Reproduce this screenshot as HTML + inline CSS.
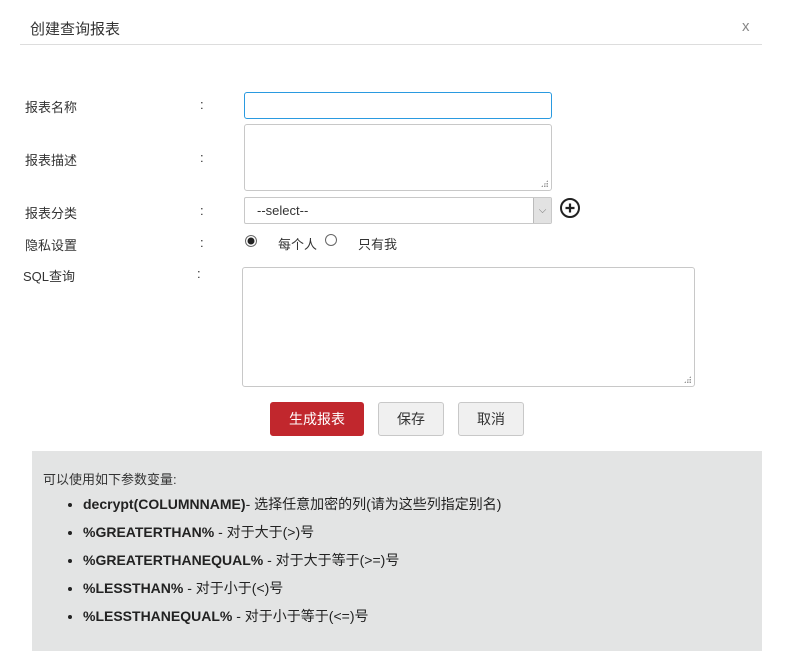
<!DOCTYPE html>
<html><head><meta charset="utf-8"><style>
body{margin:0;width:795px;height:671px;background:#fff;font-family:"Liberation Sans","Noto Sans CJK SC",sans-serif;color:#333;font-size:13px;position:relative;overflow:hidden}
.a{position:absolute}
.lbl{position:absolute;left:25px}
.col{position:absolute;left:200px}
.box{position:absolute;border:1px solid #c8c8c8;border-radius:3px;background:#fff;box-sizing:border-box}
.btn{position:absolute;top:402px;height:34px;border:1px solid #c8c8c8;border-radius:3px;background:#f0f0f0;box-sizing:border-box;text-align:center;line-height:32px;font-size:14px}
.grip{position:absolute;right:3px;bottom:3px;width:7px;height:7px;background:radial-gradient(circle,#999 0.8px,transparent 1px) 0 0/2.5px 2.5px;clip-path:polygon(100% 0,100% 100%,0 100%)}
li{margin:0 0 12px 0;line-height:16px;font-size:14px}
</style></head><body>
<div class="a" style="left:30px;top:18px;font-size:15px;color:#333">创建查询报表</div>
<div class="a" style="left:742px;top:18px;font-size:15px;color:#888">x</div>
<div class="a" style="left:20px;top:44px;width:742px;height:1px;background:#ddd"></div>

<div class="lbl" style="top:97px">报表名称</div><div class="col" style="top:97px">:</div>
<div class="box" style="left:244px;top:92px;width:308px;height:27px;border-color:#2a9ae0"></div>

<div class="lbl" style="top:150px">报表描述</div><div class="col" style="top:150px">:</div>
<div class="box" style="left:244px;top:124px;width:308px;height:67px"><div class="grip"></div></div>

<div class="lbl" style="top:203px">报表分类</div><div class="col" style="top:203px">:</div>
<div class="box" style="left:244px;top:197px;width:308px;height:27px;border-radius:2px"><span class="a" style="left:12px;top:5px">--select--</span><div class="a" style="right:0;top:0;width:17px;height:25px;background:#e2e2e2;border-left:1px solid #bbb;color:#777;font-size:10px;text-align:center;line-height:25px">⌵</div></div>
<svg class="a" style="left:559px;top:197px" width="22" height="22" viewBox="0 0 22 22"><circle cx="11" cy="11" r="9" fill="none" stroke="#222" stroke-width="2"/><path d="M11 6.5v9M6.5 11h9" stroke="#222" stroke-width="2.2"/></svg>

<div class="lbl" style="top:235px">隐私设置</div><div class="col" style="top:235px">:</div>
<svg class="a" style="left:244px;top:234px" width="14" height="14"><circle cx="7" cy="7" r="5.5" fill="#fff" stroke="#666"/><circle cx="7" cy="7" r="3.5" fill="#222"/></svg>
<div class="a" style="left:278px;top:234px">每个人</div>
<svg class="a" style="left:324px;top:233px" width="14" height="14"><circle cx="7" cy="7" r="5.5" fill="#fff" stroke="#666"/></svg>
<div class="a" style="left:358px;top:234px">只有我</div>

<div class="a" style="left:23px;top:266px">SQL查询</div><div class="a" style="left:197px;top:266px">:</div>
<div class="box" style="left:242px;top:267px;width:453px;height:120px"><div class="grip"></div></div>

<div class="btn" style="left:270px;width:94px;background:#c1272d;border-color:#c1272d;color:#fff">生成报表</div>
<div class="btn" style="left:378px;width:66px">保存</div>
<div class="btn" style="left:458px;width:66px">取消</div>

<div class="a" style="left:32px;top:451px;width:730px;height:200px;background:#e3e4e4">
<div class="a" style="left:11px;top:18px">可以使用如下参数变量:</div>
<ul class="a" style="left:0;top:45px;margin:0;padding-left:51px;list-style:disc;color:#222">
<li><b>decrypt(COLUMNNAME)</b>- 选择任意加密的列(请为这些列指定别名)</li>
<li><b>%GREATERTHAN%</b> - 对于大于(&gt;)号</li>
<li><b>%GREATERTHANEQUAL%</b> - 对于大于等于(&gt;=)号</li>
<li><b>%LESSTHAN%</b> - 对于小于(&lt;)号</li>
<li><b>%LESSTHANEQUAL%</b> - 对于小于等于(&lt;=)号</li>
</ul></div>
</body></html>
